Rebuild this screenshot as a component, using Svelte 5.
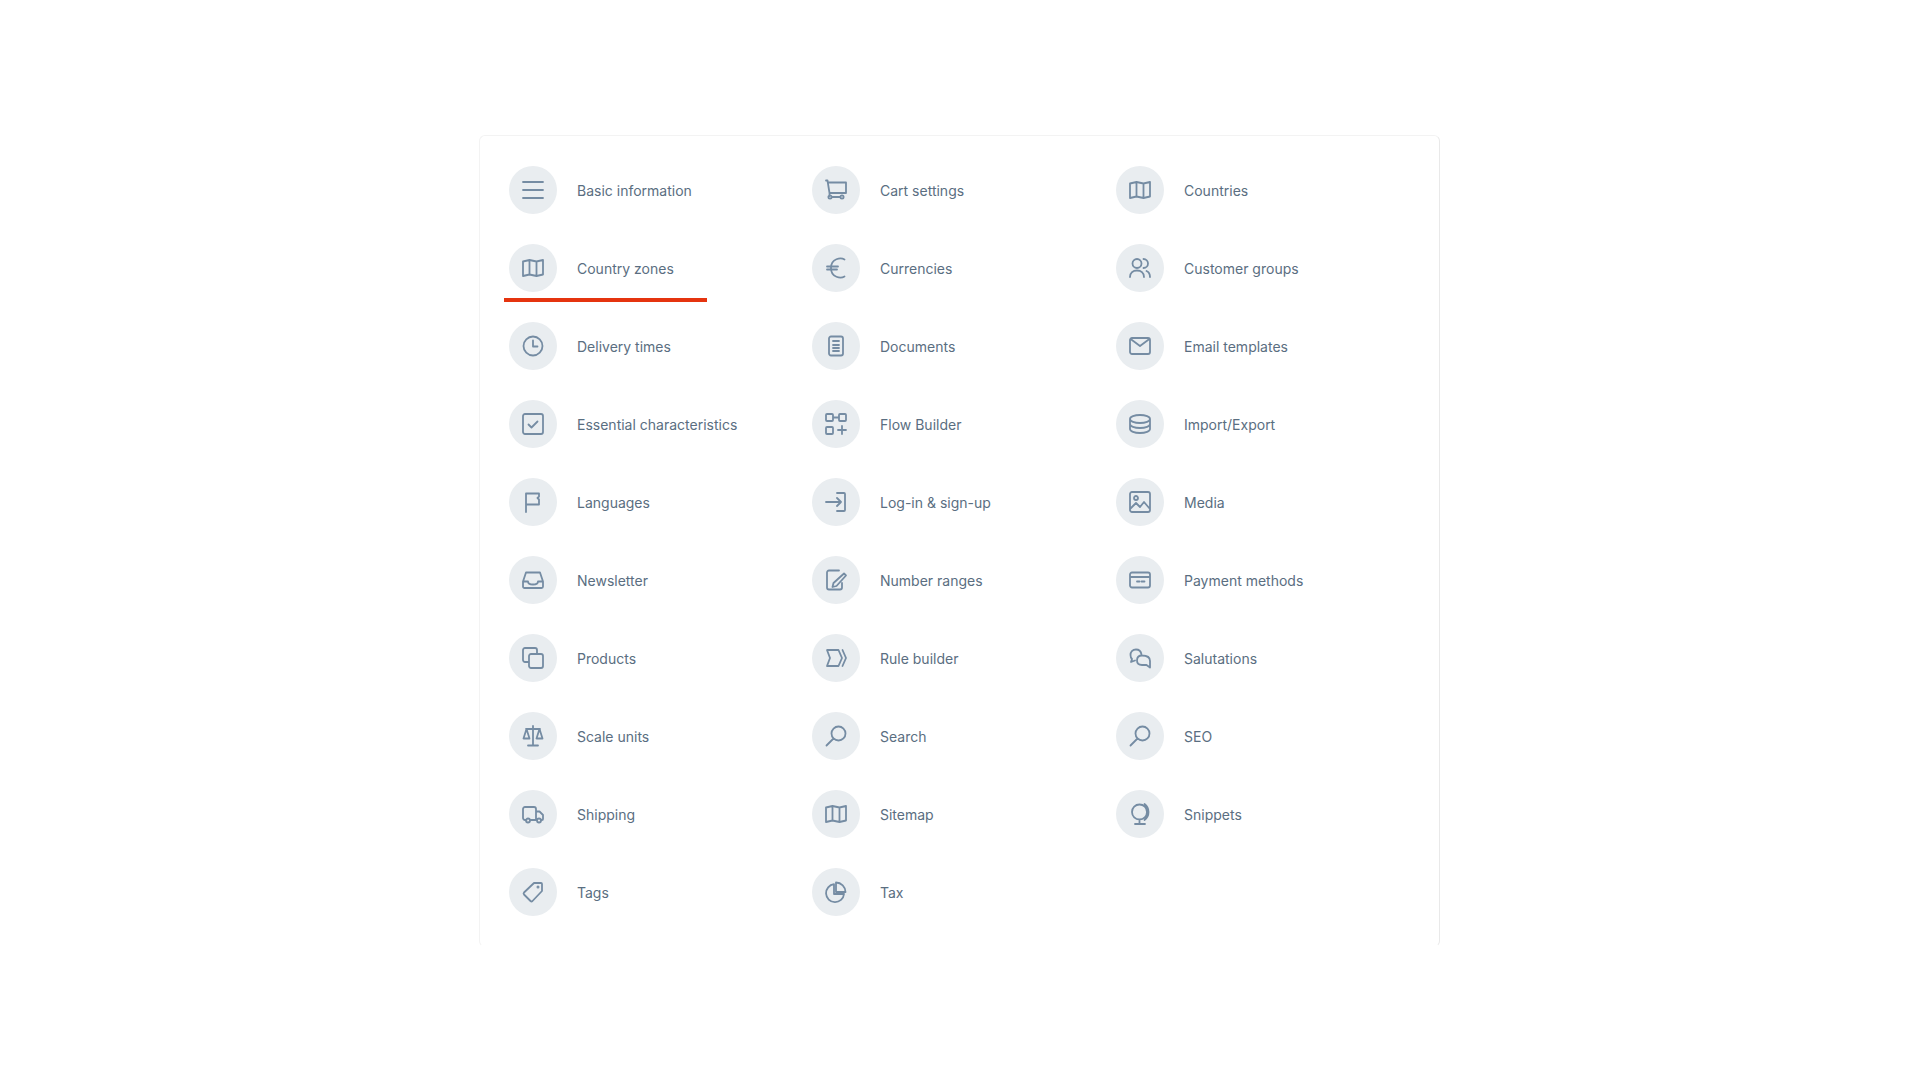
<script>
  const circle = (cx, cy, r) =>
    `M${cx - r} ${cy}a${r} ${r} 0 1 0 ${r * 2} 0a${r} ${r} 0 1 0 ${-r * 2} 0z`;

  const map = 'M2 5.500L8.500 4l7 1.500L22 4v14.500L15.500 20l-7-1.500L2 20zM8.500 4v14.500M15.500 5.500V20';
  const search = circle(14.5, 9.5, 7) + 'M9.5 14.5L2.5 21.5';

  const items = [
    ['Basic information', 'M2 4h20M2 12h20M2 20h20'],
    ['Cart settings', 'M2 2.500h1.500l2 12.500v3M4.200 4.500H22v10.500H5.500M7.500 19h9' + circle(6, 19, 1.6) + circle(18, 19, 1.6)],
    ['Countries', map],
    ['Country zones', map],
    ['Currencies', 'M20.500 3.500C17 1.500 7 2 7 12s10 10.500 13.500 8.500M3 10.500h11M3 13.500h10'],
    ['Customer groups', circle(9, 7.5, 4.5) + 'M2 21c0-4 3-6.500 7-6.500s7 2.500 7 6.500M15.500 3a4.500 4.500 0 0 1 0 9M18.500 15c2.200 1 3.500 3 3.500 6'],
    ['Delivery times', circle(12, 12, 9.5) + 'M12 6.500V12.500h4.500'],
    ['Documents', 'M7 2.500h10a2 2 0 0 1 2 2v15a2 2 0 0 1-2 2H7a2 2 0 0 1-2-2v-15a2 2 0 0 1 2-2zM9 7h6M9 11h6M9 14h6M9 17h6'],
    ['Email templates', 'M4 4h16a2 2 0 0 1 2 2v12a2 2 0 0 1-2 2H4a2 2 0 0 1-2-2V6a2 2 0 0 1 2-2zM2.600 5l9.400 7 9.400-7'],
    ['Essential characteristics', 'M4 2h16a2 2 0 0 1 2 2v16a2 2 0 0 1-2 2H4a2 2 0 0 1-2-2V4a2 2 0 0 1 2-2zM7.500 12.500l3 3 6-6'],
    ['Flow Builder', 'M3 2h5a1 1 0 0 1 1 1v5a1 1 0 0 1-1 1H3a1 1 0 0 1-1-1V3a1 1 0 0 1 1-1zM16 2h5a1 1 0 0 1 1 1v5a1 1 0 0 1-1 1h-5a1 1 0 0 1-1-1V3a1 1 0 0 1 1-1zM3 15h5a1 1 0 0 1 1 1v5a1 1 0 0 1-1 1H3a1 1 0 0 1-1-1v-5a1 1 0 0 1 1-1zM9 5.500h6M18 14v8M14 18h8'],
    ['Import/Export', 'M2 7c0-2.200 4.500-4 10-4s10 1.800 10 4-4.500 4-10 4S2 9.200 2 7zM2 7v10c0 2.200 4.500 4 10 4s10-1.800 10-4V7M2 12c0 2.200 4.500 4 10 4s10-1.800 10-4'],
    ['Languages', 'M5 22V3.500h13v3l-1.500 1.500 1.500 1.500V14.500H5'],
    ['Log-in & sign-up', 'M13 3h7a1 1 0 0 1 1 1v16a1 1 0 0 1-1 1h-7M2 12h15M13 8l4 4-4 4'],
    ['Media', 'M4 2h16a2 2 0 0 1 2 2v16a2 2 0 0 1-2 2H4a2 2 0 0 1-2-2V4a2 2 0 0 1 2-2z' + circle(8, 8, 2) + 'M2 19l6-6 4 4 4-5 6 7'],
    ['Newsletter', 'M2 13.500L5 4.500h14l3 9v5a1.500 1.500 0 0 1-1.500 1.500h-17A1.500 1.500 0 0 1 2 18.500zM2 13.500h5c0 1.700 2 3 5 3s5-1.300 5-3h5'],
    ['Number ranges', 'M15 2.500H5a2 2 0 0 0-2 2v15a2 2 0 0 0 2 2h11a2 2 0 0 0 2-2v-4.500M20 5.500l2 2-9.500 10.500-4 1 1-4z'],
    ['Payment methods', 'M4 4.500h16a2 2 0 0 1 2 2v11a2 2 0 0 1-2 2H4a2 2 0 0 1-2-2v-11a2 2 0 0 1 2-2zM2 9h20M9 13.500h2.500M13.500 13.500h3'],
    ['Products', 'M10 8h10a2 2 0 0 1 2 2v10a2 2 0 0 1-2 2H10a2 2 0 0 1-2-2V10a2 2 0 0 1 2-2zM7.500 16H4a2 2 0 0 1-2-2V4a2 2 0 0 1 2-2h10a2 2 0 0 1 2 2v3.500'],
    ['Rule builder', 'M3 4h11.500l3.500 8-3.500 8H3l3-8zM18.500 4l3.500 8-3.500 8'],
    ['Salutations', 'M13.500 8.500C13 5.500 11 3.500 8 3.500c-3.500 0-5.500 2.500-5.500 5.500 0 1.500.5 3 1.500 4l-1 3 4-1.500M14 9.500c4 0 8 1.500 8 5.500v6.500l-3.500-2.500H14c-3 0-5-1.500-5-4.500s2-5 5-5z'],
    ['Scale units', 'M12 2v19M7 21.500h10M5 5h14M5.500 5L2.500 14.500h6zM18.500 5l-3 9.500h6z'],
    ['Search', search],
    ['SEO', search],
    ['Shipping', 'M5.500 18H4a2 2 0 0 1-2-2V7a2 2 0 0 1 2-2h9a2 2 0 0 1 2 2v11M15 9.500h3.500L22 13v4a1 1 0 0 1-1 1h-1M9 18h6.500' + circle(7, 18.5, 2) + circle(18, 18.5, 2)],
    ['Sitemap', map],
    ['Snippets', circle(11.5, 10, 7.5) + 'M16.500 2a10 10 0 0 1 0 16M11.500 19v3M7 22h10'],
    ['Tags', 'M13 3h7a1 1 0 0 1 1 1v7L11.500 21a1.500 1.500 0 0 1-2 0L3 14.500a1.500 1.500 0 0 1 0-2z' + circle(17, 7, 0.6)],
    ['Tax', 'M10 4.200A9 9 0 1 0 20 14H10zM12 2.500A9.500 9.500 0 0 1 21.500 12H12z']
  ];
</script>

<div class="card">
  <div class="grid">
    {#each items as [label, d]}
      <a class="item" class:active={label === 'Country zones'} href="#{label}">
        <span class="icon">
          <svg width="24" height="24" viewBox="0 0 24 24" fill="none">
            <path {d} />
          </svg>
        </span>
        <span class="label">{label}</span>
      </a>
    {/each}
  </div>
</div>

<style>
  :global(body) {
    background: #fff;
    font-family: Inter, "Liberation Sans", sans-serif;
  }

  .card {
    box-sizing: border-box;
    width: 961px;
    height: 812px;
    margin: 135px 0 0 479px;
    padding: 25px 24px 0;
    border: 1px solid #f3f3f3;
    border-right-color: #e9e9e9;
    border-bottom-color: #fff;
    border-radius: 6px;
  }

  .grid {
    display: grid;
    grid-template-columns: 303px 304px 1fr;
    row-gap: 15px;
  }

  .item {
    box-sizing: border-box;
    width: 203px;
    height: 63px;
    padding: 5px 5px 10px;
    display: flex;
    align-items: center;
    gap: 20px;
    color: #5a6e81;
    font-size: 14px;
    text-decoration: none;
    white-space: nowrap;
  }

  .item.active {
    border-bottom: 4px solid #e5340f;
    padding-bottom: 6px;
  }

  .icon {
    flex: none;
    width: 48px;
    height: 48px;
    border-radius: 50%;
    background: #e9edf0;
    display: flex;
    align-items: center;
    justify-content: center;
  }

  svg path {
    stroke: #758ca3;
    stroke-width: 1.8;
    stroke-linecap: round;
    stroke-linejoin: round;
  }
</style>
